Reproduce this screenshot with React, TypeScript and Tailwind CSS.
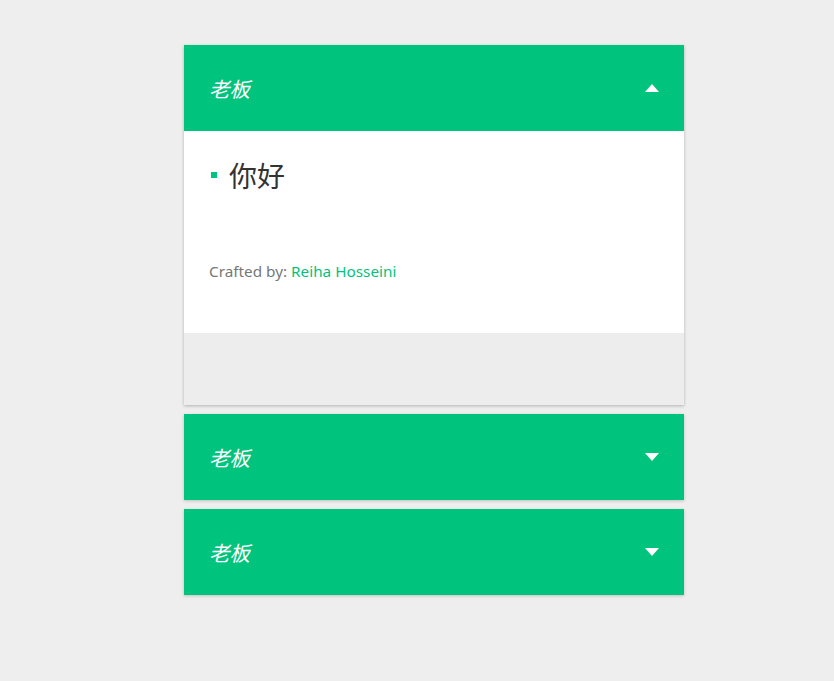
import React from 'react';

const Caret = ({ up }: { up?: boolean }) => (
  <svg width="14" height="8" viewBox="0 0 14 8" className="block">
    {up ? <path d="M0 8 L7 0 L14 8 Z" fill="#fff" /> : <path d="M0 0 L7 8 L14 0 Z" fill="#fff" />}
  </svg>
);

const Header = ({ up }: { up?: boolean }) => (
  <div className="h-[86px] bg-[#00c37d] flex items-center justify-between pl-[25px] pr-[25px]">
    <span className="text-white italic text-[20.5px] font-['Noto_Sans_CJK_SC',sans-serif]">老板</span>
    <Caret up={up} />
  </div>
);

export default function App() {
  return (
    <div className="min-h-[681px] bg-[#eeeeee] pt-[45px] font-['Noto_Sans','Noto_Sans_CJK_SC',sans-serif]">
      <div className="w-[500px] ml-[184px] flex flex-col gap-[9px]">
        <div className="shadow-[0_1px_3px_rgba(0,0,0,0.25)]">
          <Header up />
          <div className="bg-white h-[202px] pl-[25px] pt-[26px]">
            <div className="flex items-center gap-[12px]">
              <span className="w-[6px] h-[6px] bg-[#00c37d] ml-[2px]" />
              <span className="text-[28px] text-[#333] font-['Noto_Sans_CJK_SC',sans-serif] leading-[36px]">你好</span>
            </div>
            <p className="mt-[67px] text-[15.3px] text-[#777]">
              Crafted by: <a className="text-[#00c37d]">Reiha Hosseini</a>
            </p>
          </div>
          <div className="h-[72px] bg-[#ededed]" />
        </div>
        <div className="shadow-[0_1px_3px_rgba(0,0,0,0.2)]">
          <Header />
        </div>
        <div className="shadow-[0_1px_3px_rgba(0,0,0,0.2)]">
          <Header />
        </div>
      </div>
    </div>
  );
}
